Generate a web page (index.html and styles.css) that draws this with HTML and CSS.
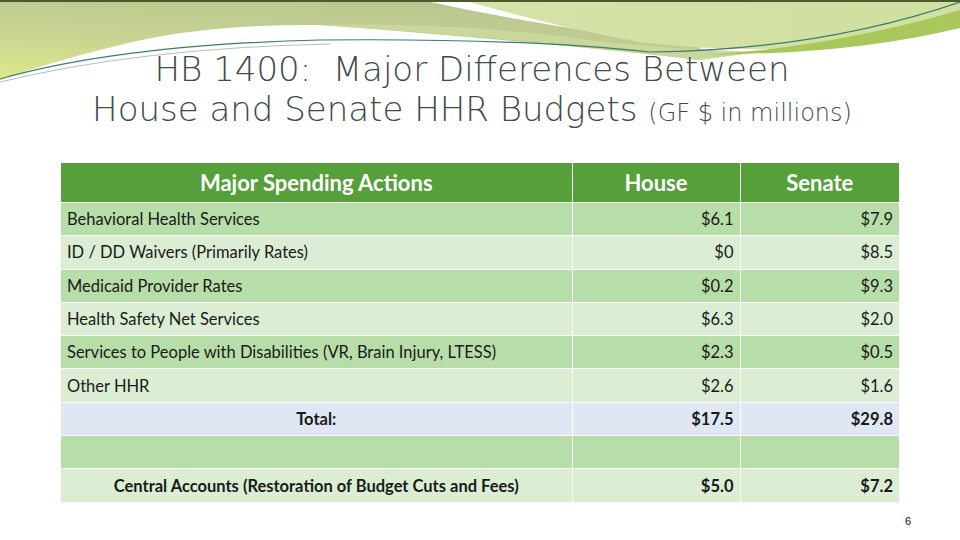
FILE: index.html
```html
<!DOCTYPE html>
<html>
<head>
<meta charset="utf-8">
<link rel="stylesheet" href="styles.css">
</head>
<body>
<div class="slide">
  <svg class="deco" width="960" height="100" viewBox="0 0 960 100" aria-hidden="true">
    <defs>
      <linearGradient id="gl" x1="0" y1="1" x2="0.6" y2="0">
        <stop offset="0" stop-color="#dde98a"/>
        <stop offset="0.5" stop-color="#c6d392"/>
        <stop offset="1" stop-color="#b9c68f"/>
      </linearGradient>
      <linearGradient id="gr" x1="0" y1="0" x2="1" y2="0">
        <stop offset="0" stop-color="#d6e2a8"/>
        <stop offset="1" stop-color="#cfe0a0"/>
      </linearGradient>
    </defs>
    <rect x="0" y="0" width="960" height="2" fill="#4b5a2c"/>
    <path d="M0 2 L430 2 Q560 30 700 45 L700 60 Q520 40 320 25 Q200 24 120 45 Q50 62 0 80 Z" fill="url(#gl)"/>
    <path d="M470 2 L960 2 L960 25 Q900 40 800 48 Q720 52 640 42 Q560 28 470 2 Z" fill="url(#gr)"/>
    <path d="M320 25 Q520 38 700 60 L760 52 Q640 48 560 36 Q440 22 320 25 Z" fill="#c9d69c"/>
    <path d="M700 55 Q830 48 960 10 L960 28 Q860 52 740 54 Z" fill="#a9c75a"/>
    <path d="M0 79 Q120 45 320 40 Q520 38 650 52 Q820 50 960 2" fill="none" stroke="#3a7d6c" stroke-width="1.2"/>
    <path d="M0 82 Q140 48 330 44" fill="none" stroke="#9fb0a8" stroke-width="0.8"/>
  </svg>
  <h1 class="title">
    <span class="line">HB 1400:&nbsp; Major Differences Between</span>
    <span class="line">House and Senate HHR Budgets <small>(GF $ in millions)</small></span>
  </h1>
  <table class="budget">
    <colgroup>
      <col class="c1"><col class="c2"><col class="c3">
    </colgroup>
    <thead>
      <tr><th>Major Spending Actions</th><th>House</th><th>Senate</th></tr>
    </thead>
    <tbody>
      <tr class="dark"><td>Behavioral Health Services</td><td class="num">$6.1</td><td class="num">$7.9</td></tr>
      <tr class="light"><td>ID / DD Waivers (Primarily Rates)</td><td class="num">$0</td><td class="num">$8.5</td></tr>
      <tr class="dark"><td>Medicaid Provider Rates</td><td class="num">$0.2</td><td class="num">$9.3</td></tr>
      <tr class="light"><td>Health Safety Net Services</td><td class="num">$6.3</td><td class="num">$2.0</td></tr>
      <tr class="dark"><td>Services to People with Disabilities (VR, Brain Injury, LTESS)</td><td class="num">$2.3</td><td class="num">$0.5</td></tr>
      <tr class="light"><td>Other HHR</td><td class="num">$2.6</td><td class="num">$1.6</td></tr>
      <tr class="total"><td class="ctr">Total:</td><td class="num">$17.5</td><td class="num">$29.8</td></tr>
      <tr class="dark"><td></td><td></td><td></td></tr>
      <tr class="light bold"><td class="ctr">Central Accounts (Restoration of Budget Cuts and Fees)</td><td class="num">$5.0</td><td class="num">$7.2</td></tr>
    </tbody>
  </table>
  <div class="pagenum">6</div>
</div>
</body>
</html>
```

FILE: styles.css
```css
html, body {
  margin: 0;
  padding: 0;
  background: #ffffff;
}
.slide {
  position: relative;
  width: 960px;
  height: 540px;
  overflow: hidden;
  background: #ffffff;
}
.deco {
  position: absolute;
  left: 0;
  top: 0;
}
.title {
  position: relative;
  margin: 0;
  padding: 49px 16px 0 0;
  text-align: center;
  font-family: "DejaVu Sans", sans-serif;
  font-weight: 200;
  font-size: 34px;
  line-height: 40px;
  color: #3f4b46;
}
.title .line {
  display: block;
}
.title small {
  font-size: 24px;
}
.budget {
  margin: 30px 0 0 61px;
  width: 838px;
  border-collapse: collapse;
  font-family: "Lato", sans-serif;
  font-size: 16.5px;
  color: #1a1a1a;
}
.budget col.c1 { width: 511px; }
.budget col.c2 { width: 168px; }
.budget col.c3 { width: 159px; }
.budget th {
  height: 39px;
  padding: 0;
  background: #55a03a;
  color: #ffffff;
  font-size: 22px;
  font-weight: bold;
  text-align: center;
  border: 1px solid #ffffff;
  border-top: none;
}
.budget td {
  height: 32.3px;
  padding: 0 6px;
  border: 1px solid #ffffff;
}
.budget th:first-child, .budget td:first-child { border-left: none; }
.budget th:last-child, .budget td:last-child { border-right: none; }
.budget tr.dark td { background: #b7dea8; }
.budget tr.light td { background: #dbeed4; }
.budget tr.total td { background: #dfe7f3; font-weight: bold; }
.budget tr.bold td { font-weight: bold; }
.budget td.num { text-align: right; }
.budget td.ctr { text-align: center; }
.pagenum {
  position: absolute;
  left: 905px;
  top: 515px;
  font-family: "Liberation Sans", sans-serif;
  font-size: 11px;
  color: #111;
}
```
